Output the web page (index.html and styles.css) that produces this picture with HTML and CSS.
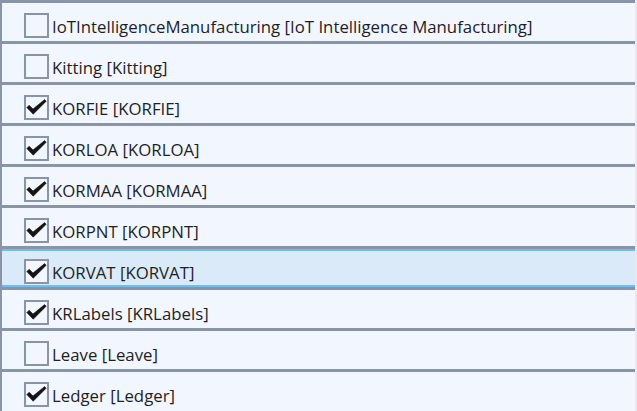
FILE: index.html
```html
<!DOCTYPE html>
<html>
<head>
<meta charset="utf-8">
<link rel="stylesheet" href="styles.css">
</head>
<body>
<div class="frame">
  <ul class="list">
    <li class="row"><span class="box"></span><span class="label">IoTIntelligenceManufacturing [IoT Intelligence Manufacturing]</span></li>
    <li class="row"><span class="box"></span><span class="label">Kitting [Kitting]</span></li>
    <li class="row"><span class="box checked"><svg viewBox="0 0 25 25"><path d="M2.8 12.6 L5.2 10.2 L9 14 L20.6 4.6 L22.2 6.2 L9.2 19.2 Z"/></svg></span><span class="label">KORFIE [KORFIE]</span></li>
    <li class="row"><span class="box checked"><svg viewBox="0 0 25 25"><path d="M2.8 12.6 L5.2 10.2 L9 14 L20.6 4.6 L22.2 6.2 L9.2 19.2 Z"/></svg></span><span class="label">KORLOA [KORLOA]</span></li>
    <li class="row"><span class="box checked"><svg viewBox="0 0 25 25"><path d="M2.8 12.6 L5.2 10.2 L9 14 L20.6 4.6 L22.2 6.2 L9.2 19.2 Z"/></svg></span><span class="label">KORMAA [KORMAA]</span></li>
    <li class="row"><span class="box checked"><svg viewBox="0 0 25 25"><path d="M2.8 12.6 L5.2 10.2 L9 14 L20.6 4.6 L22.2 6.2 L9.2 19.2 Z"/></svg></span><span class="label">KORPNT [KORPNT]</span></li>
    <li class="row selected"><span class="box checked"><svg viewBox="0 0 25 25"><path d="M2.8 12.6 L5.2 10.2 L9 14 L20.6 4.6 L22.2 6.2 L9.2 19.2 Z"/></svg></span><span class="label">KORVAT [KORVAT]</span></li>
    <li class="row"><span class="box checked"><svg viewBox="0 0 25 25"><path d="M2.8 12.6 L5.2 10.2 L9 14 L20.6 4.6 L22.2 6.2 L9.2 19.2 Z"/></svg></span><span class="label">KRLabels [KRLabels]</span></li>
    <li class="row"><span class="box"></span><span class="label">Leave [Leave]</span></li>
    <li class="row"><span class="box checked"><svg viewBox="0 0 25 25"><path d="M2.8 12.6 L5.2 10.2 L9 14 L20.6 4.6 L22.2 6.2 L9.2 19.2 Z"/></svg></span><span class="label">Ledger [Ledger]</span></li>
  </ul>
</div>
</body>
</html>
```
FILE: styles.css
```css
html, body {
  margin: 0;
  padding: 0;
  background: #e8e9ee;
  height: 411px;
  overflow: hidden;
}
.frame {
  width: 635px;
  height: 411px;
  background: #f2f6fe;
  border-left: 2px solid #8b94a6;
  box-sizing: border-box;
}
.list {
  list-style: none;
  margin: 0;
  padding: 0;
}
.row {
  height: 41px;
  box-sizing: border-box;
  border-top: 3px solid #8b94a6;
  padding: 10px 0 3px 22px;
  display: flex;
  align-items: center;
  gap: 3px;
  background: #f2f6fe;
  font-family: "Open Sans", "Noto Sans", sans-serif;
  font-size: 16.8px;
  color: #1e1e1e;
}
.row.selected {
  background: #dbeaf9;
  box-shadow: inset 0 2px 0 #6cc0ec, inset 0 -2px 0 #6cc0ec;
}
.box {
  width: 25px;
  height: 25px;
  box-sizing: border-box;
  border: 2px solid #8b94a6;
  background: #f2f6fe;
  flex: none;
  position: relative;
}
.box svg {
  position: absolute;
  left: -2px;
  top: -2px;
  width: 25px;
  height: 25px;
}
.box svg path {
  fill: #141414;
  stroke: #141414;
  stroke-width: 0.6;
  stroke-linejoin: round;
}
.label {
  white-space: nowrap;
  line-height: 25px;
  padding-top: 1px;
}
```
